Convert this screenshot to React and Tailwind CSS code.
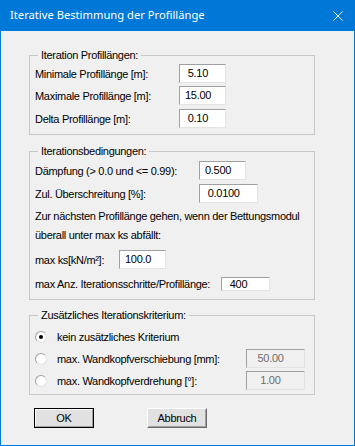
import React from 'react';

const body = { fontFamily: '"Liberation Sans", Arial, sans-serif' };

const Field = ({ value, w, pad = 'pl-[5px]', disabled = false, h = 'h-[19px]' }) => (
  <div
    className={`${w} ${h} ${pad} shrink-0 flex items-center border border-t-[#a0a0a0] border-l-[#a0a0a0] border-r-[#e3e3e3] border-b-[#e3e3e3] whitespace-pre text-[11px] tracking-[-0.3px] leading-none ${
      disabled ? 'bg-[#f0f0f0] text-[#6d6d6d]' : 'bg-white text-black'
    }`}
  >
    <span>{value}</span>
  </div>
);

const Group = ({ title, className = '', children }) => (
  <fieldset className={`w-[286px] border border-[#c8c8c8] ${className}`}>
    <legend className="ml-[8px] px-[3px] h-[14px] text-[11px] leading-[14px] whitespace-nowrap">{title}</legend>
    {children}
  </fieldset>
);

const Radio = ({ checked }) => (
  <span className="w-[12px] h-[12px] rounded-full bg-white border border-t-[#a0a0a0] border-l-[#a0a0a0] border-r-[#e3e3e3] border-b-[#e3e3e3] flex items-center justify-center shrink-0">
    {checked && <span className="w-[4px] h-[4px] rounded-full bg-black" />}
  </span>
);

const Label = ({ w = '', className = '', children }) => (
  <span className={`${w} ${className} whitespace-nowrap text-[11px] leading-[14px] shrink-0`}>{children}</span>
);

export default function App() {
  return (
    <div className="w-[355px] h-[446px] border border-t-0 border-[#0078d7] bg-[#f0f0f0] flex flex-col text-black overflow-hidden">
      <div className="h-[31px] -mx-[1px] bg-[#0078d7] flex items-center justify-between pl-[10px] pr-[12px] shrink-0">
        <span className="text-white text-[11.2px] whitespace-nowrap" style={{ fontFamily: '"Noto Sans", sans-serif' }}>
          Iterative Bestimmung der Profillänge
        </span>
        <svg width="10" height="10" viewBox="0 0 10 10">
          <path d="M0.5 0.5 L9.5 9.5 M9.5 0.5 L0.5 9.5" stroke="white" strokeWidth="1" />
        </svg>
      </div>

      <div className="pl-[28px] flex flex-col tracking-[-0.3px]" style={body}>
        <Group title="Iteration Profillängen:" className="mt-[17px] pt-[2px] pb-[6px]">
          <div className="flex flex-col gap-[3px]">
            {[
              ['Minimale Profillänge [m]:', ' 5.10'],
              ['Maximale Profillänge [m]:', '15.00'],
              ['Delta Profillänge [m]:', ' 0.10'],
            ].map(([label, value], i) => (
              <div key={label} className={`flex items-center ${i === 2 ? 'mt-[1px]' : ''}`}>
                <Label w="w-[149px]" className="pl-[5px]">{label}</Label>
                <Field value={value} w="w-[47px]" />
              </div>
            ))}
          </div>
        </Group>

        <Group title="Iterationsbedingungen:" className="mt-[9px] pt-[3px] pb-[8px]">
          <div className="flex items-center">
            <Label w="w-[169px]" className="pl-[5px]">Dämpfung (&gt; 0.0 und &lt;= 0.99):</Label>
            <Field value="0.500" w="w-[47px]" />
          </div>
          <div className="flex items-center mt-[4px]">
            <Label w="w-[169px]" className="pl-[5px]">Zul. Überschreitung [%]:</Label>
            <Field value=" 0.0100" w="w-[59px]" />
          </div>
          <div className="pl-[5px] text-[11px] leading-[19px] mt-[4px] whitespace-nowrap">
            Zur nächsten Profillänge gehen, wenn der Bettungsmodul
            <br />
            überall unter max ks abfällt:
          </div>
          <div className="flex items-center mt-[5px]">
            <Label w="w-[89px]" className="pl-[5px]">max ks[kN/m²]:</Label>
            <Field value="100.0" w="w-[47px]" />
          </div>
          <div className="flex items-start mt-[8px] h-[14px]">
            <Label w="w-[191px]" className="pl-[5px]">max Anz. Iterationsschritte/Profillänge:</Label>
            <Field value=" 400" w="w-[49px]" h="h-[14px]" />
          </div>
        </Group>

        <Group title="Zusätzliches Iterationskriterium:" className="mt-[8px] pt-[5px] pb-[4px]">
          <div className="flex items-center h-[19px] pl-[5px]">
            <Radio checked />
            <Label className="ml-[10px]">kein zusätzliches Kriterium</Label>
          </div>
          <div className="flex items-center h-[19px] pl-[5px] mt-[3px]">
            <Radio />
            <Label w="w-[189px]" className="ml-[10px]">max. Wandkopfverschiebung [mm]:</Label>
            <Field value="  50.00" w="w-[59px]" disabled />
          </div>
          <div className="flex items-center h-[19px] pl-[5px] mt-[3px]">
            <Radio />
            <Label w="w-[189px]" className="ml-[10px]">max. Wandkopfverdrehung [°]:</Label>
            <Field value="   1.00" w="w-[59px]" disabled />
          </div>
        </Group>

        <div className="flex mt-[13px] pl-[5px] gap-[53px]">
          <button className="w-[60px] h-[20px] border border-black bg-[#e1e1e1] text-[11px] leading-none">
            <span className="flex items-center justify-center w-full h-full border border-t-white border-l-white border-r-[#a0a0a0] border-b-[#a0a0a0]">
              OK
            </span>
          </button>
          <button className="w-[60px] h-[20px] border border-t-white border-l-white border-r-[#696969] border-b-[#696969] bg-[#e1e1e1] text-[11px] leading-none">
            <span className="flex items-center justify-center w-full h-full border border-transparent border-r-[#a0a0a0] border-b-[#a0a0a0]">
              Abbruch
            </span>
          </button>
        </div>
      </div>
    </div>
  );
}
